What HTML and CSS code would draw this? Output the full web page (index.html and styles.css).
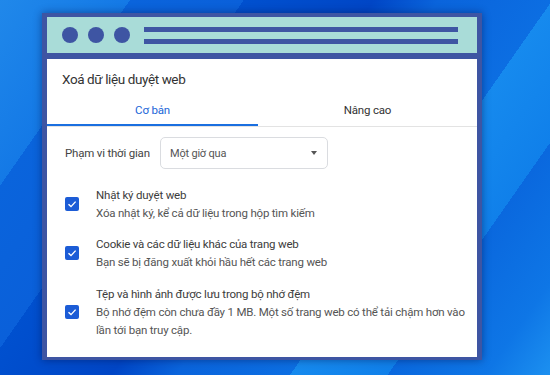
FILE: index.html
```html
<!DOCTYPE html>
<html>

<head>
    <meta charset="UTF-8">
    <title>Xoá dữ liệu duyệt web</title>
    <link rel="stylesheet" href="styles.css">
</head>

<body>
    <div class="frame">
        <!-- Thanh trình duyệt -->
        <div class="topbar">
            <span class="dot"></span>
            <span class="dot"></span>
            <span class="dot"></span>
            <div class="lines">
                <span class="line"></span>
                <span class="line"></span>
            </div>
        </div>

        <div class="dialog">
            <h1>Xoá dữ liệu duyệt web</h1>

            <!-- Các thẻ -->
            <div class="tabs">
                <div class="tab active">Cơ bản</div>
                <div class="tab">Nâng cao</div>
            </div>

            <!-- Phạm vi thời gian -->
            <div class="range">
                <span class="range-label">Phạm vi thời gian</span>
                <div class="select">
                    <span>Một giờ qua</span>
                    <span class="caret"></span>
                </div>
            </div>

            <!-- Danh sách lựa chọn -->
            <div class="item">
                <span class="check"><svg viewBox="0 0 14 14" width="14" height="14"><path d="M3.5 7.2 L6 9.6 L10.6 4.6" fill="none" stroke="#fff" stroke-width="1.4"/></svg></span>
                <div class="item-text">
                    <div class="item-title">Nhật ký duyệt web</div>
                    <div class="item-sub">Xóa nhật ký, kể cả dữ liệu trong hộp tìm kiếm</div>
                </div>
            </div>

            <div class="item">
                <span class="check"><svg viewBox="0 0 14 14" width="14" height="14"><path d="M3.5 7.2 L6 9.6 L10.6 4.6" fill="none" stroke="#fff" stroke-width="1.4"/></svg></span>
                <div class="item-text">
                    <div class="item-title">Cookie và các dữ liệu khác của trang web</div>
                    <div class="item-sub">Bạn sẽ bị đăng xuất khỏi hầu hết các trang web</div>
                </div>
            </div>

            <div class="item">
                <span class="check"><svg viewBox="0 0 14 14" width="14" height="14"><path d="M3.5 7.2 L6 9.6 L10.6 4.6" fill="none" stroke="#fff" stroke-width="1.4"/></svg></span>
                <div class="item-text">
                    <div class="item-title">Tệp và hình ảnh được lưu trong bộ nhớ đệm</div>
                    <div class="item-sub">Bộ nhớ đệm còn chưa đầy 1 MB. Một số trang web có thể tải chậm hơn vào lần tới bạn truy cập.</div>
                </div>
            </div>
        </div>
    </div>
</body>

</html>
```

FILE: styles.css
```css
body {
    margin: 0;
    width: 550px;
    height: 375px;
    overflow: hidden;
    font-family: Roboto, "Noto Sans", sans-serif;
    background: linear-gradient(125deg,
        #2088ea 0%, #1479e6 16%,
        #0a64dc 16%, #0a60da 30%,
        #0050cf 30%, #0046c6 46%,
        #0a64dc 54%, #0c6ee2 68%,
        #168aee 68%, #1080ea 80%,
        #0a68de 80%, #0e76e6 92%,
        #1c90f0 100%);
    padding-top: 13px;
    box-sizing: border-box;
}

.frame {
    width: 440px;
    margin-left: 42px;
    background-color: #3e55a3;
    padding: 4px 5px 3px 5px;
    box-sizing: border-box;
    box-shadow: 0 0 8px rgba(0, 10, 60, 0.45);
}

.topbar {
    height: 36px;
    background-color: #a9dcd8;
    display: flex;
    align-items: center;
    padding: 0 19px 0 15px;
    margin-bottom: 6px;
}

.dot {
    width: 16px;
    height: 16px;
    border-radius: 50%;
    background-color: #3e55a3;
    margin-right: 10px;
}

.dot:nth-child(3) {
    margin-right: 14px;
}

.lines {
    flex: 1;
    display: flex;
    flex-direction: column;
    gap: 7px;
}

.line {
    height: 5px;
    background-color: #3e55a3;
}

.dialog {
    background-color: #fff;
    height: 298px;
    color: #3c4043;
    letter-spacing: -0.2px;
}

h1 {
    margin: 0;
    padding-left: 15px;
    font-size: 13.5px;
    font-weight: normal;
    line-height: 40px;
    letter-spacing: -0.4px;
    color: #333;
}

.tabs {
    display: flex;
    height: 28px;
    border-bottom: 1px solid #e3e3e3;
    box-sizing: border-box;
}

.tab {
    flex: 1;
    text-align: center;
    font-size: 11.5px;
    line-height: 22px;
    color: #333;
}

.tab.active {
    flex: 0 0 211px;
    color: #1a66d8;
    box-shadow: inset 0 -2px 0 #1a6fe0;
}

.range {
    display: flex;
    align-items: center;
    margin-top: 10px;
    padding-left: 18px;
    height: 32px;
}

.range-label {
    font-size: 11.5px;
    width: 95px;
    color: #444;
    white-space: nowrap;
}

.select {
    width: 168px;
    height: 32px;
    box-sizing: border-box;
    border: 1px solid #dadce0;
    border-radius: 5px;
    display: flex;
    align-items: center;
    justify-content: space-between;
    padding: 0 10px 0 9px;
    font-size: 11px;
    color: #555;
}

.caret {
    width: 0;
    height: 0;
    border-left: 3.5px solid transparent;
    border-right: 3.5px solid transparent;
    border-top: 4px solid #555;
}

.item {
    display: flex;
    align-items: center;
    padding-left: 18px;
    margin-top: 13px;
}

.range + .item {
    margin-top: 17px;
}

.item:last-child {
    margin-top: 14px;
}

.check {
    width: 14px;
    height: 14px;
    border-radius: 2px;
    background-color: #1c5cd6;
    margin-right: 17px;
    flex-shrink: 0;
}

.check svg {
    display: block;
}

.item-text {
    font-size: 11.5px;
    line-height: 18px;
    width: 375px;
}

.item-title {
    color: #3c3c3c;
}

.item-sub {
    color: #555;
}
```
